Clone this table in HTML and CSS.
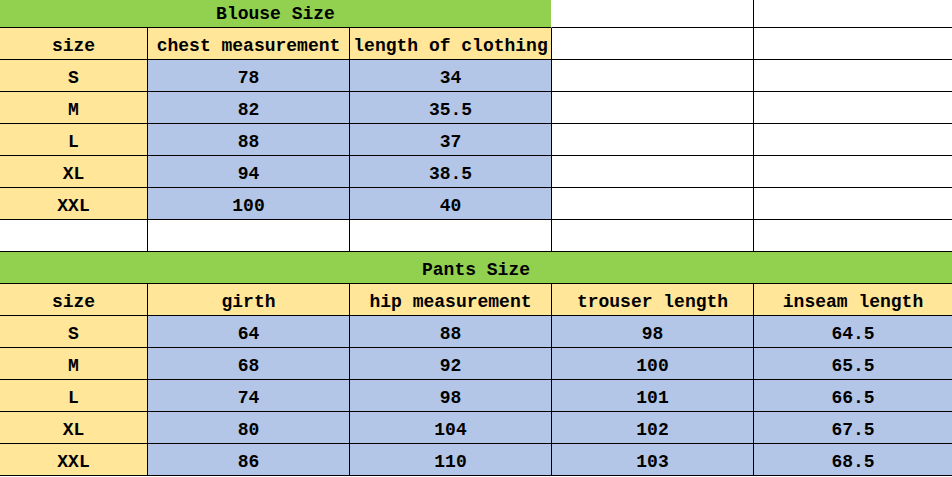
FILE: index.html
```html
<!DOCTYPE html>
<html>
<head>
<meta charset="utf-8">
<link rel="stylesheet" href="styles.css">
</head>
<body>
<div class="sheet">
  <div class="c green span3 title-cell">Blouse Size</div>
  <div class="c top"></div>
  <div class="c top last"></div>

  <div class="c yellow">size</div>
  <div class="c yellow">chest measurement</div>
  <div class="c yellow">length of clothing</div>
  <div class="c"></div>
  <div class="c last"></div>

  <div class="c yellow">S</div><div class="c blue">78</div><div class="c blue">34</div><div class="c"></div><div class="c last"></div>
  <div class="c yellow">M</div><div class="c blue">82</div><div class="c blue">35.5</div><div class="c"></div><div class="c last"></div>
  <div class="c yellow">L</div><div class="c blue">88</div><div class="c blue">37</div><div class="c"></div><div class="c last"></div>
  <div class="c yellow">XL</div><div class="c blue">94</div><div class="c blue">38.5</div><div class="c"></div><div class="c last"></div>
  <div class="c yellow">XXL</div><div class="c blue">100</div><div class="c blue">40</div><div class="c"></div><div class="c last"></div>

  <div class="c"></div><div class="c"></div><div class="c"></div><div class="c"></div><div class="c last"></div>

  <div class="c green span5">Pants Size</div>

  <div class="c yellow">size</div>
  <div class="c yellow">girth</div>
  <div class="c yellow">hip measurement</div>
  <div class="c yellow">trouser length</div>
  <div class="c yellow last">inseam length</div>

  <div class="c yellow">S</div><div class="c blue">64</div><div class="c blue">88</div><div class="c blue">98</div><div class="c blue last">64.5</div>
  <div class="c yellow">M</div><div class="c blue">68</div><div class="c blue">92</div><div class="c blue">100</div><div class="c blue last">65.5</div>
  <div class="c yellow">L</div><div class="c blue">74</div><div class="c blue">98</div><div class="c blue">101</div><div class="c blue last">66.5</div>
  <div class="c yellow">XL</div><div class="c blue">80</div><div class="c blue">104</div><div class="c blue">102</div><div class="c blue last">67.5</div>
  <div class="c yellow">XXL</div><div class="c blue">86</div><div class="c blue">110</div><div class="c blue">103</div><div class="c blue last">68.5</div>
</div>
</body>
</html>
```

FILE: styles.css
```css
html, body {
  margin: 0;
  padding: 0;
  background: #ffffff;
  overflow: hidden;
}

.sheet {
  display: grid;
  grid-template-columns: 148px 202px 202px 202px 198px;
  grid-template-rows: 28px repeat(14, 32px);
  width: 952px;
  font-family: "Liberation Mono", "DejaVu Sans Mono", monospace;
  font-weight: bold;
  font-size: 18px;
  color: #000;
}

.c {
  box-sizing: border-box;
  border-right: 1px solid #000;
  border-bottom: 1px solid #000;
  display: flex;
  align-items: center;
  justify-content: center;
  white-space: nowrap;
  overflow: hidden;
  padding-top: 4px;
}

.c.last {
  border-right: none;
}

.green {
  background: #92d050;
}

.yellow {
  background: #ffe699;
}

.blue {
  background: #b4c6e7;
}

.span3 {
  grid-column: span 3;
}

.span5 {
  grid-column: span 5;
  border-right: none;
}

.title-cell {
  border-right-color: #ffffff;
  padding-top: 0;
}

.top {
  padding-top: 0;
}
```
